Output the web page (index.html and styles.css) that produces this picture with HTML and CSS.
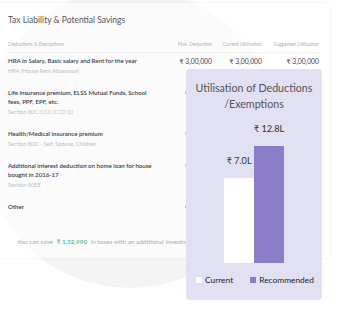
FILE: index.html
```html
<!DOCTYPE html>
<html>
<head>
<meta charset="utf-8">
<link rel="stylesheet" href="styles.css">
</head>
<body>
<div class="stage">
  <div class="blob"></div>
  <div class="card">
    <div class="card-title">Tax Liability &amp; Potential Savings</div>
    <div class="table">
      <div class="thead">
        <div>Deductions &amp; Exemptions</div>
        <div class="num">Max. Deduction</div>
        <div class="num">Current Utilisation</div>
        <div class="num">Suggested Utilisation</div>
      </div>
      <div class="row">
        <div><div class="name">HRA in Salary, Basic salary and Rent for the year</div><div class="sub">HRA (House Rent Allowance)</div></div>
        <div class="num val">₹ 3,00,000</div>
        <div class="num val">₹ 3,00,000</div>
        <div class="num val">₹ 3,00,000</div>
      </div>
      <div class="row">
        <div><div class="name">Life insurance premium, ELSS Mutual Funds, School<br>fees, PPF, EPF, etc.</div><div class="sub">Section 80C/CCC/CCD (1)</div></div>
        <div class="num val">₹ 50,000</div>
        <div class="num val">₹ 50,000</div>
        <div class="num val">₹ 50,000</div>
      </div>
      <div class="row">
        <div><div class="name">Health/Medical insurance premium</div><div class="sub">Section 80D - Self, Spouse, Children</div></div>
        <div class="num val">₹ 25,000</div>
        <div class="num val">₹ 25,000</div>
        <div class="num val">₹ 25,000</div>
      </div>
      <div class="row">
        <div><div class="name">Additional interest deduction on home loan for house<br>bought in 2016-17</div><div class="sub">Section 80EE</div></div>
        <div class="num val">₹ 50,000</div>
        <div class="num val">₹ 50,000</div>
        <div class="num val">₹ 50,000</div>
      </div>
      <div class="row last">
        <div><div class="name">Other</div></div>
        <div class="num val">₹ 50,000</div>
        <div class="num val">₹ 50,000</div>
        <div class="num val">₹ 50,000</div>
      </div>
    </div>
    <div class="footer">You can save <span class="amt">₹ 1,32,990</span> in taxes with an additional investment</div>
  </div>

  <div class="popup">
    <div class="pop-title">Utilisation of Deductions<br>/Exemptions</div>
    <div class="chart">
      <div class="col">
        <div class="lbl">₹ 7.0L</div>
        <div class="bar white" style="height:85px"></div>
      </div>
      <div class="col">
        <div class="lbl">₹ 12.8L</div>
        <div class="bar purple" style="height:117px"></div>
      </div>
    </div>
    <div class="legend">
      <span class="key"><span class="sw sw-white"></span>Current</span>
      <span class="key"><span class="sw sw-purple"></span>Recommended</span>
    </div>
  </div>
</div>
</body>
</html>
```

FILE: styles.css
```css
* { box-sizing: border-box; }
html, body { margin: 0; padding: 0; background: #fff; }
body { font-family: Lato, "Open Sans", sans-serif; }

.stage {
  position: relative;
  width: 351px;
  height: 327px;
  overflow: hidden;
  padding-top: 3px;
}

.blob {
  position: absolute;
  left: -20px;
  top: -12px;
  width: 300px;
  height: 300px;
  border-radius: 50%;
  background: #f4f4f5;
}

.card {
  position: relative;
  margin-left: -6px;
  width: 336px;
  height: 255px;
  border-radius: 5px;
  background: rgba(255, 255, 255, 0.62);
  box-shadow: 0 0 3px rgba(0, 0, 0, 0.07);
  padding: 11px 11px 0 14px;
  display: flex;
  flex-direction: column;
}

.card-title {
  font-size: 8.5px;
  line-height: 12px;
  color: #555;
}

.table { margin-top: 14px; }

.thead, .row {
  display: grid;
  grid-template-columns: 1fr 48px 50px 57px;
}

.thead {
  font-size: 4.9px;
  line-height: 8px;
  color: #b3b3b3;
  padding-bottom: 4px;
  border-bottom: 1px solid #efefef;
}

.num { text-align: right; white-space: nowrap; }

.row { padding: 3.75px 0 10px; }
.row.last { padding-bottom: 4px; }

.name {
  font-size: 6.1px;
  line-height: 8.5px;
  color: #3a3a3a;
  font-weight: 600;
}

.sub {
  margin-top: 2px;
  font-size: 5.6px;
  line-height: 8px;
  color: #bdbdbd;
}

.val {
  font-size: 6.8px;
  line-height: 8.5px;
  color: #444;
}

.footer {
  margin-top: auto;
  padding: 0 0 11px 9px;
  font-size: 6.4px;
  line-height: 10px;
  color: #ababab;
  white-space: nowrap;
  overflow: hidden;
}

.amt { color: #62b99a; font-weight: 700; margin: 0 2px; }

.popup {
  position: absolute;
  left: 186px;
  top: 69px;
  width: 136px;
  height: 231px;
  border-radius: 4px;
  background: #e2e0f3;
  display: flex;
  flex-direction: column;
  align-items: center;
  padding-top: 11px;
}

.pop-title {
  font-size: 10.7px;
  line-height: 16px;
  color: #555;
  text-align: center;
}

.chart {
  height: 151px;
  display: flex;
  align-items: flex-end;
  justify-content: center;
}

.col {
  width: 30px;
  display: flex;
  flex-direction: column;
  align-items: center;
}

.lbl {
  font-size: 9.2px;
  line-height: 12px;
  color: #333;
  white-space: nowrap;
  margin-bottom: 11px;
}

.bar { width: 30px; }
.bar.white { background: #fff; }
.bar.purple { background: #8b7dc8; }

.legend {
  align-self: stretch;
  display: flex;
  gap: 17px;
  padding-left: 10px;
  margin-top: 12px;
  font-size: 8.4px;
  line-height: 10px;
  color: #222;
}

.key { display: flex; align-items: center; }
.sw { width: 6px; height: 6px; margin-right: 3px; display: inline-block; }
.sw-white { background: #fff; }
.sw-purple { background: #8b7dc8; }
```
